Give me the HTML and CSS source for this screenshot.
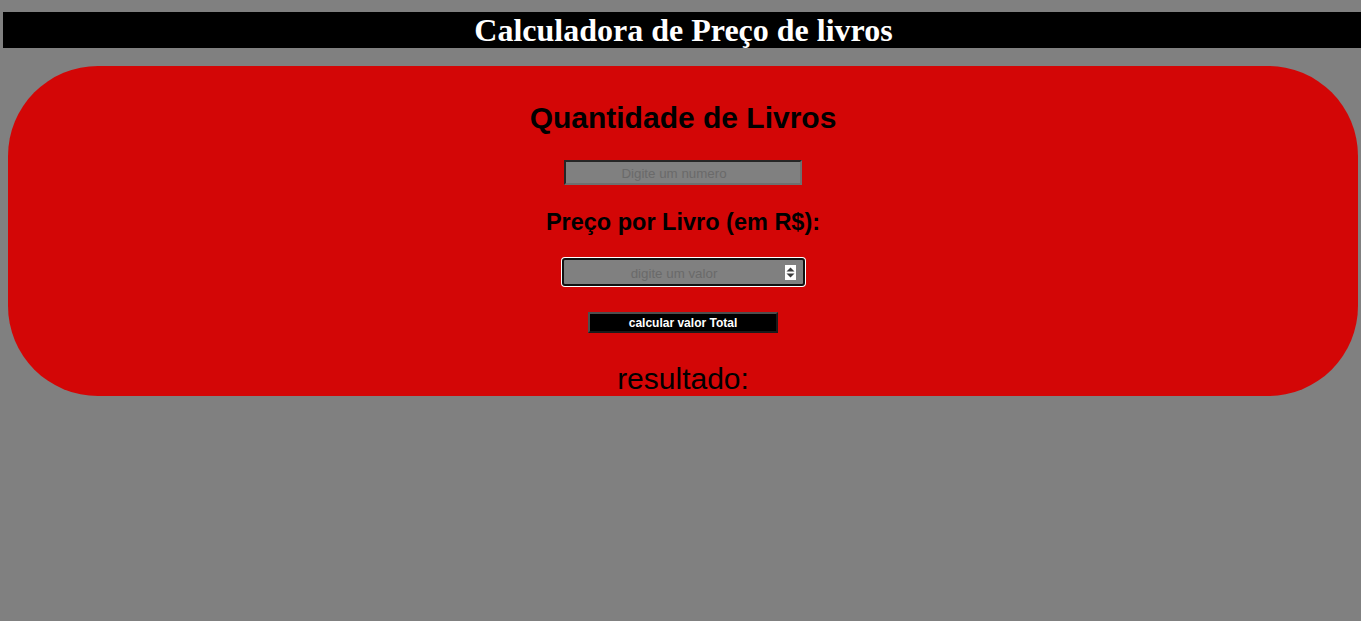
FILE: index.html
```html
<!DOCTYPE html>
<html lang="pt-BR">
<head>
<meta charset="utf-8">
<title>Calculadora de Preço de livros</title>
<link rel="stylesheet" href="styles.css">
</head>
<body>
<header class="topbar">
  <h1 class="title">Calculadora de Preço de livros</h1>
</header>
<main class="card">
  <h2 class="heading">Quantidade de Livros</h2>
  <div class="field field-qty">
    <input class="field-input" type="text" placeholder="Digite um numero">
    <span class="spin spin-hidden"></span>
  </div>
  <h3 class="subheading">Preço por Livro (em R$):</h3>
  <div class="field field-price">
    <input class="field-input" type="text" placeholder="digite um valor">
    <span class="spin">
      <svg width="11" height="15" viewBox="0 0 11 15">
        <rect width="11" height="15" fill="#ffffff"/>
        <path d="M1.5 6.5 L5.5 2.5 L9.5 6.5 Z" fill="#3c3c3c"/>
        <path d="M1.5 8.5 L5.5 12.5 L9.5 8.5 Z" fill="#3c3c3c"/>
      </svg>
    </span>
  </div>
  <button class="calc-btn" type="button">calcular valor Total</button>
  <p class="result">resultado:</p>
</main>
</body>
</html>
```

FILE: styles.css
```css
html, body {
  margin: 0;
  padding: 0;
}

body {
  background: #808080;
  padding: 12px 0 0 3px;
  font-family: "Liberation Sans", Arial, sans-serif;
  overflow: hidden;
}

.topbar {
  background: #000000;
  height: 36px;
}

.title {
  margin: 0;
  padding-left: 3px;
  font-family: "Liberation Serif", "Times New Roman", serif;
  font-weight: bold;
  font-size: 32px;
  line-height: 37px;
  color: #ffffff;
  text-align: center;
}

.card {
  box-sizing: border-box;
  margin: 18px 0 0 5px;
  width: 1350px;
  height: 330px;
  background: #d30606;
  border-radius: 90px;
  padding-top: 35px;
  display: flex;
  flex-direction: column;
  align-items: center;
}

.heading {
  margin: 0;
  font-size: 30px;
  line-height: 34px;
  font-weight: bold;
  color: #000000;
}

.field {
  box-sizing: border-box;
  display: flex;
  align-items: center;
  background: #808080;
}

.field-qty {
  margin-top: 25px;
  width: 238px;
  height: 25px;
  border-style: solid;
  border-width: 2px;
  border-color: #262626 #6f6f6f #6f6f6f #262626;
}

.field-price {
  margin-top: 23px;
  width: 243px;
  height: 28px;
  border: 2px solid #101010;
  border-radius: 3px;
  box-shadow: 0 0 0 1px #ffffff;
}

.field-input {
  flex: 1;
  min-width: 0;
  height: 100%;
  box-sizing: border-box;
  border: none;
  outline: none;
  background: transparent;
  padding: 2px 2px 0;
  font-family: "Liberation Sans", Arial, sans-serif;
  font-size: 13.333px;
  color: #000000;
  text-align: center;
}

.field-input::placeholder {
  color: #6a6a6a;
  opacity: 1;
}

.spin {
  display: flex;
  width: 11px;
  height: 15px;
  margin: 0 7px 0 0;
}

.spin-hidden {
  visibility: hidden;
}

.subheading {
  margin: 24px 0 0;
  font-size: 23.5px;
  line-height: 26px;
  font-weight: bold;
  color: #000000;
}

.calc-btn {
  box-sizing: border-box;
  margin-top: 26px;
  width: 190px;
  height: 21px;
  padding: 1px 0 0;
  background: #000000;
  color: #ffffff;
  font-family: "Liberation Sans", Arial, sans-serif;
  font-size: 12px;
  font-weight: bold;
  border-style: solid;
  border-width: 2px;
  border-color: #4e4e4e #1a1a1a #1a1a1a #4e4e4e;
}

.result {
  margin: 29px 0 0;
  font-size: 30px;
  line-height: 34px;
  color: #000000;
}
```
